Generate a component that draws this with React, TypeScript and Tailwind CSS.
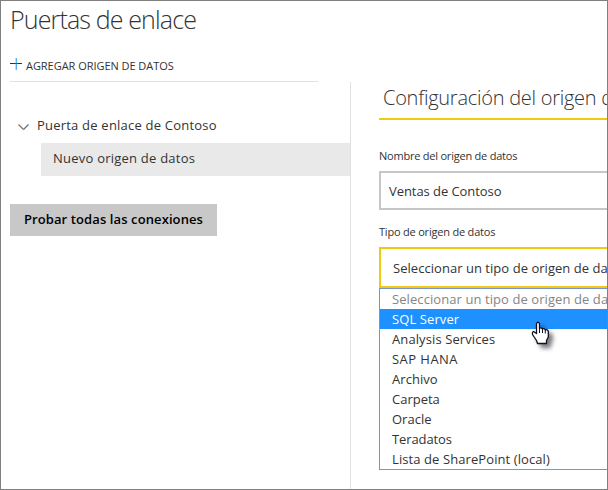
const sourceTypes = [
  { name: 'Seleccionar un tipo de origen de datos', style: 'text-[#858585] tracking-[0.08px]' },
  { name: 'SQL Server', style: 'bg-[#1e90ff] text-white tracking-[0.1px]' },
  { name: 'Analysis Services', style: 'tracking-[0.1px]' },
  { name: 'SAP HANA', style: 'tracking-[0.45px]' },
  { name: 'Archivo', style: 'tracking-[0.05px]' },
  { name: 'Carpeta', style: '' },
  { name: 'Oracle', style: '' },
  { name: 'Teradatos', style: '-tracking-[0.1px]' },
  { name: 'Lista de SharePoint (local)', style: 'tracking-[0.09px]' },
];

function HandCursor() {
  return (
    <svg
      className="absolute left-[529px] top-[319px] drop-shadow-[4px_4px_2px_rgba(0,0,0,0.5)]"
      width="24"
      height="28"
      viewBox="0 0 24 28"
    >
      <path
        d="M7.5 14.5V4.5Q9 2 10.5 4.5V9.5Q12 8 13.5 10Q15 8.8 16.3 11Q18.5 10 19.3 12.5V18L17.5 21.5V24.5H8.5L7.5 21.5L3.5 15.5Q3 12.5 5 12.7Z"
        fill="#fff"
        stroke="#111122"
        strokeWidth="1.3"
        strokeLinejoin="round"
      />
      <path d="M10.5 9V14M13.5 10V14M16.3 11V14.5" stroke="#111122" strokeWidth="1" fill="none" />
    </svg>
  );
}

function Header() {
  return (
    <header className="h-[82px] pl-[10px]">
      <h1 className="h-[52px] pt-[2px] text-[25px] leading-[34px] font-light tracking-[-0.86px]">Puertas de enlace</h1>
      <div className="flex h-[30px] w-[308px] items-start border-b border-[#e0e0e0]">
        <svg className="mt-[6px]" width="13" height="13" viewBox="0 0 13 13">
          <path d="M5.5 0V12" stroke="#f6d2a2" />
          <path d="M6.5 0V12" stroke="#55b5ee" />
          <path d="M0 5.5H12" stroke="#333" />
          <path d="M5 5.5H8" stroke="#235d86" />
        </svg>
        <button className="ml-[3px] mt-[6px] text-[11px] leading-[16px] tracking-[-0.04px]">AGREGAR ORIGEN DE DATOS</button>
      </div>
    </header>
  );
}

function GatewayList() {
  return (
    <aside className="w-[351px] shrink-0 border-r border-[#e0e0e0]">
      <div className="flex h-[61px] items-start pl-[18px] pt-[33px]">
        <svg className="mt-[9px]" width="11" height="7" viewBox="0 0 11 7">
          <path d="M0.5 0.5L5.5 5.5" stroke="#a06a58" strokeWidth="1.3" fill="none" />
          <path d="M5.5 5.5L10.5 0.5" stroke="#4d79a6" strokeWidth="1.3" fill="none" />
        </svg>
        <span className="ml-[8px] text-[13px] leading-[20px] tracking-[0.21px]">Puerta de enlace de Contoso</span>
      </div>
      <div className="ml-[41px] h-[33px] bg-[#e9e9e9] pl-[12px] text-[13px] leading-[31px] tracking-[0.23px]">
        Nuevo origen de datos
      </div>
      <button className="ml-[10px] mt-[28px] h-[32px] w-[207px] bg-[#c8c8c8] text-[13px] font-semibold tracking-[0.1px] text-black">
        Probar todas las conexiones
      </button>
    </aside>
  );
}

function SourceSettings() {
  return (
    <section className="ml-[28px] w-[240px] shrink-0">
      <h2 className="h-[38px] border-b-2 border-[#f2c811] pl-[4px] text-[20px] leading-[32px] font-light tracking-[-0.26px]">
        Configuración del origen de datos
      </h2>
      <label className="mt-[28px] block h-[23px] text-[11px] leading-[16px] tracking-[-0.22px]">Nombre del origen de datos</label>
      <div className="h-[39px] border-2 border-[#c6c6c6] pl-[8px] text-[13px] leading-[36px] tracking-[-0.06px]">Ventas de Contoso</div>
      <label className="mt-[14px] block h-[23px] text-[11px] leading-[16px] tracking-[-0.2px]">Tipo de origen de datos</label>
      <div className="h-[41px] border-2 border-[#f2c811] pl-[12px] text-[13px] leading-[38px] tracking-[0.04px]">
        Seleccionar un tipo de origen de datos
      </div>
      <ul className="h-[182px] border border-[#7893cf] text-[13px] leading-[20px]">
        {sourceTypes.map((t) => (
          <li key={t.name} className={`h-[20px] pl-[12px] ${t.style}`}>
            {t.name}
          </li>
        ))}
      </ul>
    </section>
  );
}

export default function App() {
  return (
    <div className="relative h-[490px] w-[608px] overflow-hidden bg-white font-['Open_Sans','Noto_Sans',sans-serif] text-[#333] whitespace-nowrap">
      <Header />
      <main className="flex h-[408px]">
        <GatewayList />
        <SourceSettings />
      </main>
      <HandCursor />
      <div className="pointer-events-none absolute inset-0 border border-[#808080]" />
    </div>
  );
}
